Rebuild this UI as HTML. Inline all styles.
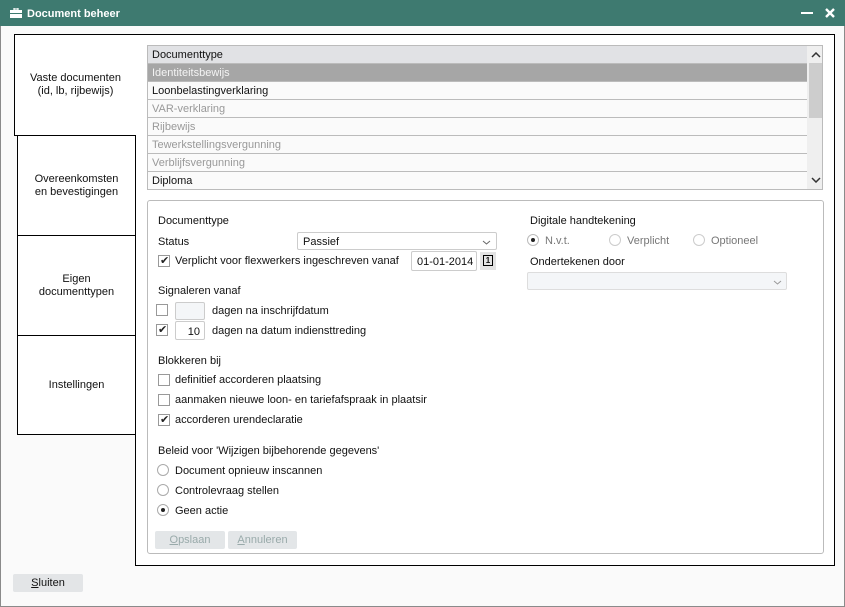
<!DOCTYPE html>
<html><head><style>
*{box-sizing:border-box;margin:0;padding:0}
body{width:845px;height:607px;background:#fff;font-family:"Liberation Sans",sans-serif;font-size:11px;color:#111;position:relative;overflow:hidden}
.a{position:absolute}
.win{left:0;top:0;width:845px;height:607px;border:1px solid #8a8a8a;border-top:none;background:#fafafa}
.title{left:0;top:0;width:845px;height:26px;background:#3e7a70;color:#fff;font-weight:bold;font-size:11px}
.tab{border:1px solid #000;background:#fff;display:flex;align-items:center;justify-content:center;text-align:center;line-height:13px}
.row{position:absolute;left:0;width:660px;height:18px;border-bottom:1px solid #bbb;padding-left:4px;line-height:19px;background:#fafafa}
.g{color:#999}
.cb{position:absolute;width:12px;height:12px;border:1px solid #999;background:#fff}
.rd{position:absolute;width:12px;height:12px;border:1px solid #aaa;border-radius:50%;background:#fff}
.dot::after{content:"";position:absolute;left:3px;top:3px;width:4px;height:4px;border-radius:50%;background:#222}
.t{position:absolute;white-space:nowrap;margin-top:1px}
.chk::after{content:"✔";position:absolute;left:1px;top:-2px;font-size:11px;color:#222}
.inp{position:absolute;border:1px solid #ccc;background:#fff;border-radius:2px}
.btn{position:absolute;background:#e3e6e8;border-radius:2px;color:#9aa;text-align:center;line-height:19px}
</style></head><body>
<div class="a win"></div>
<div class="a title">
<svg class="a" style="left:10px;top:8px" width="12" height="10" viewBox="0 0 12 10"><rect x="4" y="0" width="4" height="2" fill="none" stroke="#fff" stroke-width="1.2"/><rect x="0" y="2" width="12" height="8" fill="#fff"/><rect x="0" y="5" width="12" height="1" fill="#3e7a70"/></svg>
<span class="t" style="left:27px;top:7px">Document beheer</span>
<div class="a" style="left:801px;top:12px;width:12px;height:2px;background:#fff"></div>
<svg class="a" style="left:825px;top:8px" width="10" height="10" viewBox="0 0 10 10"><path d="M1 1L9 9M9 1L1 9" stroke="#fff" stroke-width="2.4"/></svg>
</div>
<div class="a" style="left:135px;top:34px;width:700px;height:532px;border:1px solid #000;background:#fff"></div>
<div class="a tab" style="left:14px;top:34px;width:122px;height:102px;border-right:none">Vaste documenten<br>(id, lb, rijbewijs)</div>
<div class="a tab" style="left:17px;top:135px;width:119px;height:101px">Overeenkomsten<br>en bevestigingen</div>
<div class="a tab" style="left:17px;top:235px;width:119px;height:101px">Eigen<br>documenttypen</div>
<div class="a tab" style="left:17px;top:335px;width:119px;height:100px">Instellingen</div>
<div class="a" style="left:147px;top:45px;width:676px;height:145px;border:1px solid #bbb;background:#fafafa;overflow:hidden">
<div class="row" style="top:0;background:#e1e2e5">Documenttype</div>
<div class="row" style="top:18px;background:#a6a6a6;color:#f4f4f4">Identiteitsbewijs</div>
<div class="row" style="top:36px">Loonbelastingverklaring</div>
<div class="row g" style="top:54px">VAR-verklaring</div>
<div class="row g" style="top:72px">Rijbewijs</div>
<div class="row g" style="top:90px">Tewerkstellingsvergunning</div>
<div class="row g" style="top:108px">Verblijfsvergunning</div>
<div class="row" style="top:126px;border:none">Diploma</div>
<div class="a" style="left:659px;top:0;width:16px;height:143px;background:#efefef"></div>
<div class="a" style="left:661px;top:17px;width:14px;height:55px;background:#cdcdcd"></div>
<svg class="a" style="left:663px;top:6px" width="10" height="6" viewBox="0 0 10 6"><path d="M1 5L5 1L9 5" stroke="#333" stroke-width="1.5" fill="none"/></svg>
<svg class="a" style="left:663px;top:131px" width="10" height="6" viewBox="0 0 10 6"><path d="M1 1L5 5L9 1" stroke="#333" stroke-width="1.5" fill="none"/></svg>
</div>
<div class="a" style="left:147px;top:200px;width:677px;height:354px;border:1px solid #bbb;border-radius:3px;background:#fff"></div>
<span class="t" style="left:158px;top:214px">Documenttype</span>
<span class="t" style="left:158px;top:235px">Status</span>
<div class="inp" style="left:297px;top:232px;width:200px;height:18px"><span class="t" style="left:5px;top:2px">Passief</span>
<svg class="a" style="left:184px;top:7px" width="9" height="5" viewBox="0 0 9 5"><path d="M1 1L4.5 4L8 1" stroke="#666" fill="none"/></svg></div>
<div class="cb chk" style="left:158px;top:255px"></div>
<span class="t" style="left:175px;top:254px">Verplicht voor flexwerkers ingeschreven vanaf</span>
<div class="inp" style="left:411px;top:251px;width:66px;height:20px"><span class="t" style="left:5px;top:3px">01-01-2014</span></div>
<div class="a" style="left:480px;top:252px;width:16px;height:18px;background:#e3e3e3"><div class="a" style="left:3px;top:3px;width:10px;height:11px;border:1px solid #000;font-size:8px;font-weight:bold;text-align:center;line-height:9px">1</div></div>
<span class="t" style="left:158px;top:284px">Signaleren vanaf</span>
<div class="cb" style="left:156px;top:304px"></div>
<div class="inp" style="left:175px;top:302px;width:30px;height:18px;background:#f4f6f8"></div>
<span class="t" style="left:212px;top:304px">dagen na inschrijfdatum</span>
<div class="cb chk" style="left:156px;top:324px"></div>
<div class="inp" style="left:175px;top:321px;width:30px;height:19px"><span class="t" style="right:4px;top:3px">10</span></div>
<span class="t" style="left:212px;top:324px">dagen na datum indiensttreding</span>
<span class="t" style="left:158px;top:354px">Blokkeren bij</span>
<div class="cb" style="left:158px;top:374px"></div><span class="t" style="left:175px;top:373px">definitief accorderen plaatsing</span>
<div class="cb" style="left:158px;top:394px"></div><span class="t" style="left:175px;top:393px">aanmaken nieuwe loon- en tariefafspraak in plaatsir</span>
<div class="cb chk" style="left:158px;top:414px"></div><span class="t" style="left:175px;top:413px">accorderen urendeclaratie</span>
<span class="t" style="left:158px;top:444px">Beleid voor 'Wijzigen bijbehorende gegevens'</span>
<div class="rd" style="left:157px;top:464px"></div><span class="t" style="left:175px;top:464px">Document opnieuw inscannen</span>
<div class="rd" style="left:157px;top:484px"></div><span class="t" style="left:175px;top:484px">Controlevraag stellen</span>
<div class="rd dot" style="left:157px;top:504px"></div><span class="t" style="left:175px;top:504px">Geen actie</span>
<div class="btn" style="left:155px;top:531px;width:70px;height:18px"><u>O</u>pslaan</div>
<div class="btn" style="left:228px;top:531px;width:69px;height:18px"><u>A</u>nnuleren</div>
<span class="t" style="left:530px;top:214px">Digitale handtekening</span>
<div class="rd dot" style="left:527px;top:234px;border-color:#bbb"></div><span class="t" style="left:545px;top:234px;color:#777">N.v.t.</span>
<div class="rd" style="left:609px;top:234px;border-color:#ccc"></div><span class="t" style="left:627px;top:234px;color:#777">Verplicht</span>
<div class="rd" style="left:693px;top:234px;border-color:#ccc"></div><span class="t" style="left:711px;top:234px;color:#777">Optioneel</span>
<span class="t" style="left:530px;top:255px">Ondertekenen door</span>
<div class="inp" style="left:527px;top:272px;width:260px;height:18px;background:#f4f6f8;border-color:#ddd">
<svg class="a" style="left:245px;top:7px" width="9" height="5" viewBox="0 0 9 5"><path d="M1 1L4.5 4L8 1" stroke="#999" fill="none"/></svg></div>
<div class="btn" style="left:13px;top:574px;width:70px;height:18px;color:#111;background:#e3e5e7"><u>S</u>luiten</div>
</body></html>
